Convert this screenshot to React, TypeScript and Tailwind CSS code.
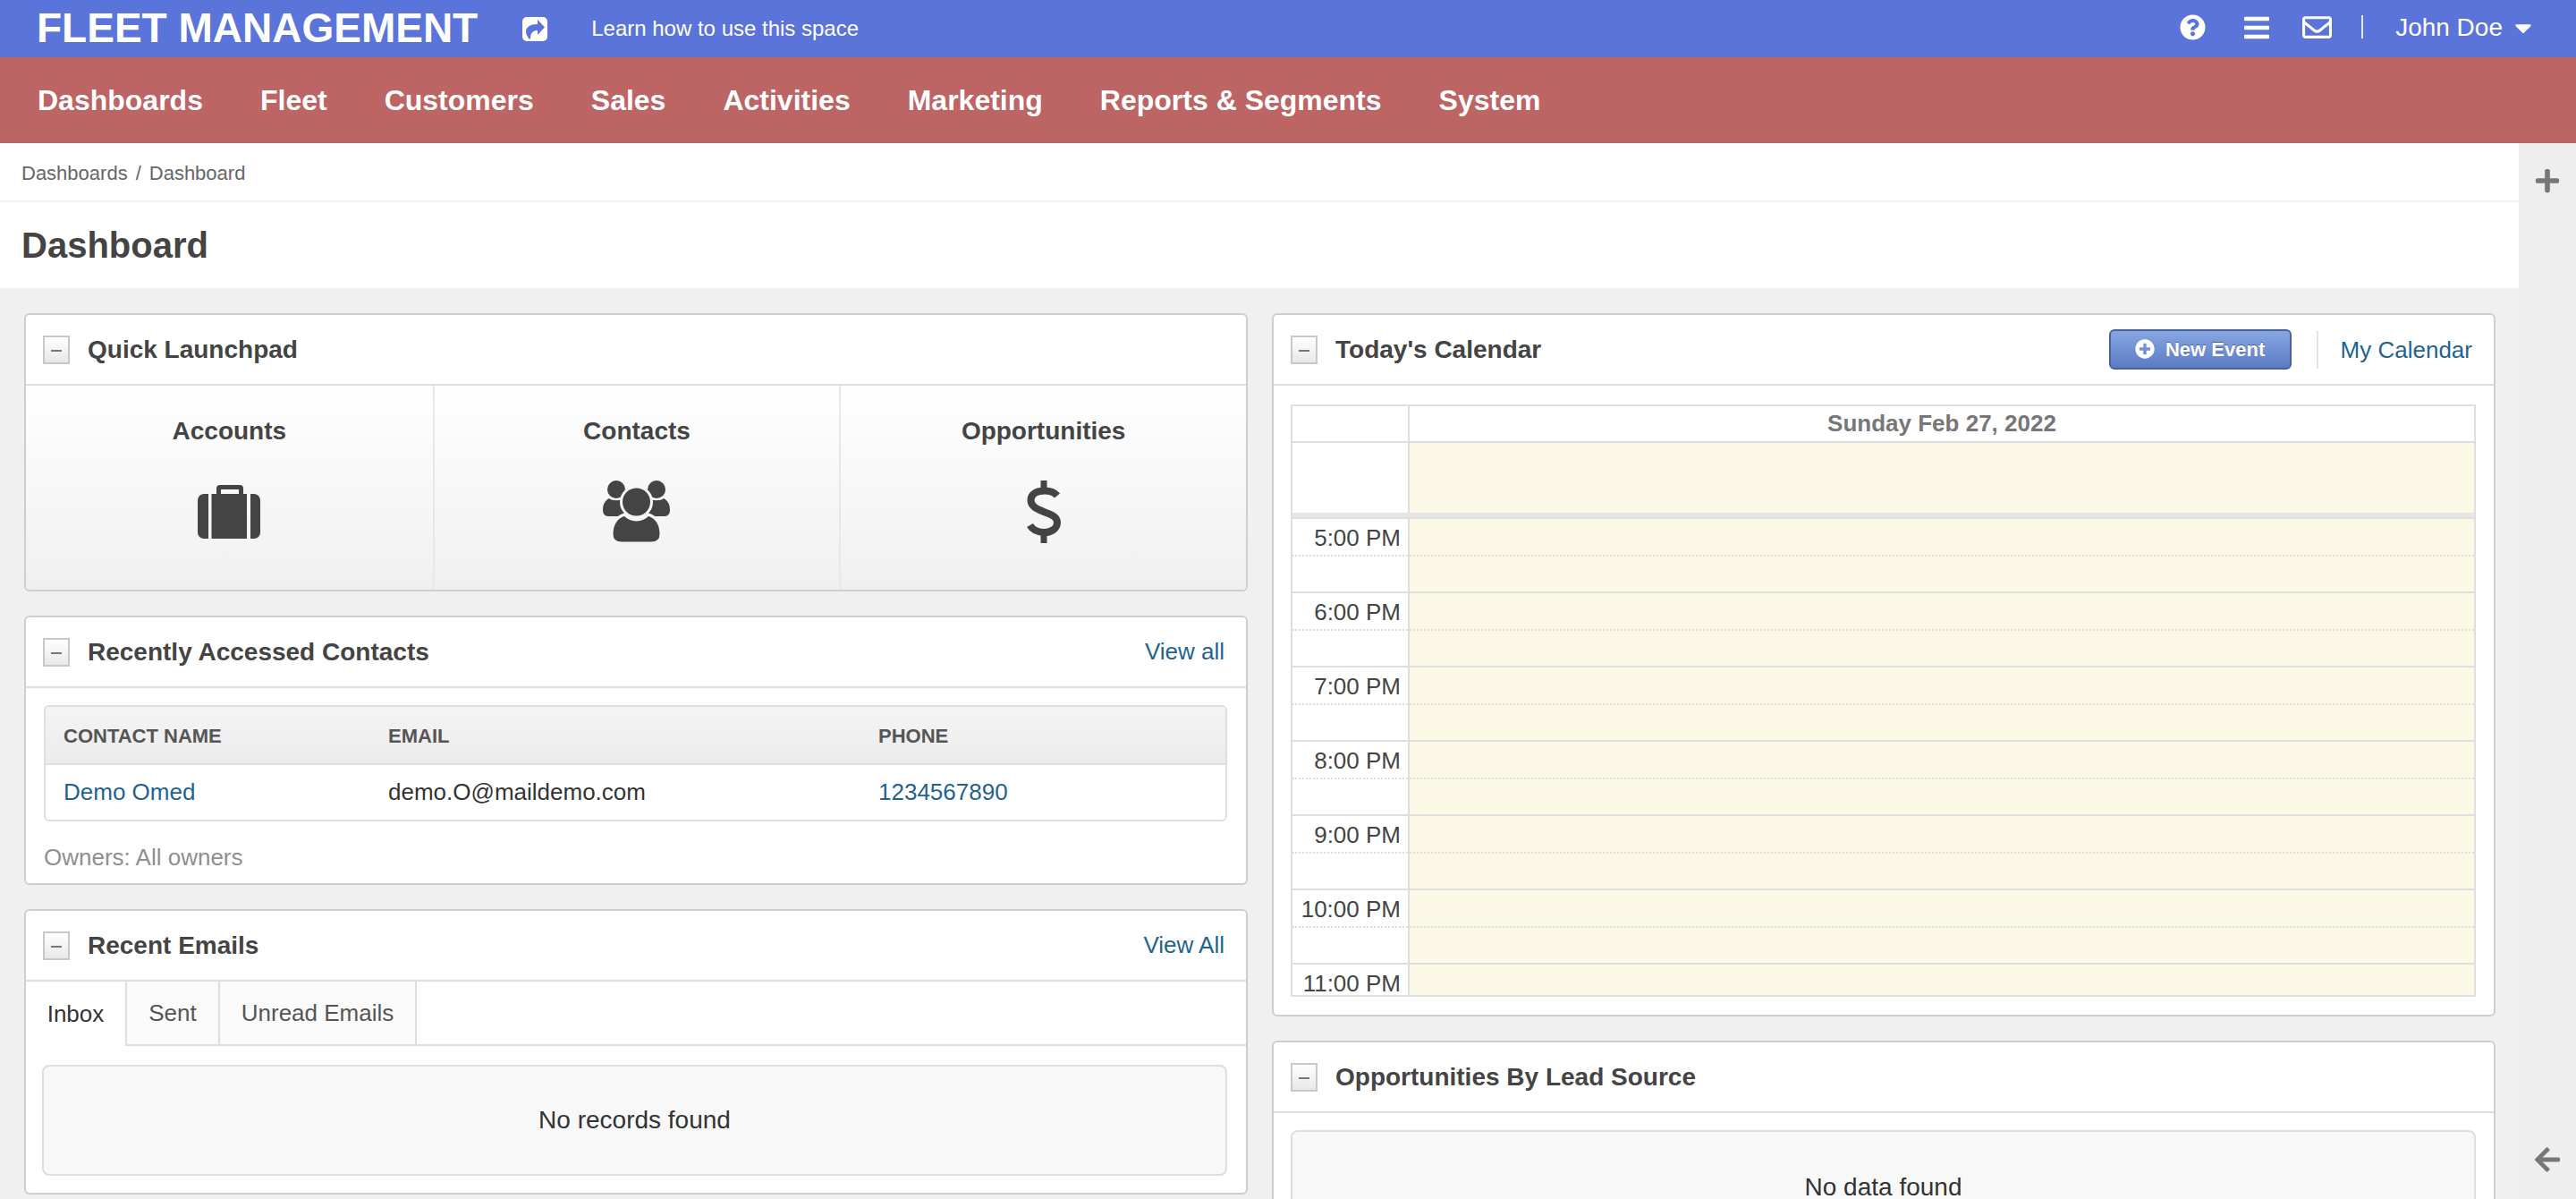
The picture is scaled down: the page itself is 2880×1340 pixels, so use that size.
import { FaBars, FaArrowLeft, FaPlus, FaQuestionCircle, FaRegEnvelope, FaPlusCircle, FaCaretDown } from 'react-icons/fa';

const FONT = "font-['Liberation_Sans',Arial,sans-serif]";
const NAV = ['Dashboards', 'Fleet', 'Customers', 'Sales', 'Activities', 'Marketing', 'Reports & Segments', 'System'];
const HOURS = ['5:00 PM', '6:00 PM', '7:00 PM', '8:00 PM', '9:00 PM', '10:00 PM', '11:00 PM'];

function ShareIcon() {
  return (
    <svg viewBox="0 0 28 27" className="w-[28px] h-[27px]">
      <rect width="28" height="27" rx="5" fill="#fff" />
      <path fill="#5b74d9" d="M17 3l8 8.500-8 8.500v-5c-5 0-8 2.500-8 9.500H7.500C5 21 4 18.500 4 16.500 4 11 9 8 17 8Z" />
    </svg>
  );
}

function BriefcaseIcon() {
  return (
    <svg viewBox="0 0 70 60" className="w-[70px] h-[60px]" fill="#444">
      <path fillRule="evenodd" d="M21 10V4a4 4 0 0 1 4-4h22a4 4 0 0 1 4 4v6h-5V5H26v5Z" />
      <path d="M7 10h5v50H7a7 7 0 0 1-7-7V17a7 7 0 0 1 7-7ZM15.500 10h39.500v50H15.500ZM59 10h4a7 7 0 0 1 7 7v36a7 7 0 0 1-7 7h-4Z" />
    </svg>
  );
}

function UsersIcon() {
  return (
    <svg viewBox="0 0 75 70" className="w-[75px] h-[70px]" fill="#444">
      <circle cx="15" cy="10" r="10" />
      <circle cx="60" cy="10" r="10" />
      <path d="M0 33C0 26 3 22 7 20C10 23 20 23 24 20V40H6C2 40 0 37 0 33Z" />
      <path d="M75 33C75 26 72 22 68 20C65 23 55 23 51 20V40H69C73 40 75 37 75 33Z" />
      <path stroke="#f6f6f6" strokeWidth="3" d="M10 60C10 48 16 41 24 38C28 42 33 44 37.500 44C42 44 47 42 51 38C59 41 65 48 65 60C65 67 60 70 54 70H21C15 70 10 67 10 60Z" />
      <circle cx="37.500" cy="24" r="17" stroke="#f6f6f6" strokeWidth="3" />
    </svg>
  );
}

function DollarIcon() {
  return (
    <svg viewBox="0 0 38 70" className="w-[38px] h-[70px]" fill="none">
      <path d="M15.500 0h7v12h-7zM15.500 58h7v12h-7z" fill="#444" />
      <path d="M34 17C30 12 25 11.500 20 11.500C11 11.500 4.500 15 4.500 22C4.500 29 11 31.500 19 35C27 38 34 40 34 47C34 54 27 58 20 58C13 58 7 56 3.500 50" stroke="#444" strokeWidth="8" />
    </svg>
  );
}

function Collapse() {
  return (
    <span className="w-[30px] h-[32px] border-2 border-[#c8c8c8] bg-gradient-to-b from-white to-[#e8e8e8] flex items-center justify-center shrink-0">
      <span className="w-[12px] h-[2px] bg-[#777] mt-[2px]" />
    </span>
  );
}

function CardHeader({ title, right }: { title: string; right?: React.ReactNode }) {
  return (
    <div className="h-[79px] flex items-center pl-[19px] pr-[24px] border-b-2 border-[#dedede]">
      <Collapse />
      <h2 className="ml-[20px] text-[28px] font-bold text-[#444]">{title}</h2>
      {right && <div className="ml-auto flex items-center">{right}</div>}
    </div>
  );
}

function Card({ children, className = '' }: { children: React.ReactNode; className?: string }) {
  return <section className={`bg-white border-2 border-[#cecece] rounded-[6px] overflow-hidden ${className}`}>{children}</section>;
}

function Launch({ label, icon, border }: { label: string; icon: React.ReactNode; border?: boolean }) {
  return (
    <div className={`flex flex-col items-center pt-[33px] ${border ? 'border-l-2 border-[#e8e8e8]' : ''}`}>
      <span className="text-[28px] leading-[36px] font-bold text-[#444]">{label}</span>
      <div className="h-[72px] mt-[36px] flex items-center justify-center">{icon}</div>
    </div>
  );
}

export default function App() {
  return (
    <div className={`${FONT} h-screen overflow-hidden flex flex-col bg-[#f0f0f0] text-[#333]`}>
      <header className="h-[64px] shrink-0 bg-[#5b74d9] text-white flex items-center pl-[41px] pr-[44px]">
        <span className="text-[46px] font-bold leading-none pb-[3px]">FLEET MANAGEMENT</span>
        <span className="ml-[50px]"><ShareIcon /></span>
        <span className="ml-[49px] text-[24px]">Learn how to use this space</span>
        <div className="ml-auto flex items-center pb-[3px]">
          <FaQuestionCircle className="text-[29px]" />
          <FaBars className="text-[32px] ml-[41px]" />
          <FaRegEnvelope className="text-[33px] ml-[35px]" />
          <span className="w-[2px] h-[26px] bg-[#dfe3f6] ml-[33px] -mt-[2px]" />
          <span className="ml-[36px] text-[28px]">John Doe</span>
          <FaCaretDown className="text-[30px] ml-[8px]" />
        </div>
      </header>

      <nav className="h-[96px] shrink-0 bg-[#bd6464] text-white flex items-center pl-[42px] gap-[64px] text-[32px] font-bold">
        {NAV.map((n) => <span key={n}>{n}</span>)}
      </nav>

      <div className="flex flex-1 min-h-0">
        <main className="flex-1 min-w-0 overflow-hidden">
          <div className="bg-white h-[62px] flex items-center pl-[24px] pt-[2px] text-[22px] text-[#666] border-b-2 border-[#f0f0f0] box-content">
            Dashboards<span className="mx-[9px]">/</span>Dashboard
          </div>
          <div className="bg-white h-[96px] flex items-center pl-[24px] text-[40px] font-bold text-[#444]">Dashboard</div>

          <div className="grid grid-cols-2 gap-[27px] pl-[27px] pr-[26px] pt-[28px] items-start">
            <div className="flex flex-col gap-[27px]">
              <Card>
                <CardHeader title="Quick Launchpad" />
                <div className="grid grid-cols-3 h-[228px] bg-gradient-to-b from-white to-[#f0f0f0]">
                  <Launch label="Accounts" icon={<BriefcaseIcon />} />
                  <Launch label="Contacts" icon={<UsersIcon />} border />
                  <Launch label="Opportunities" icon={<DollarIcon />} border />
                </div>
              </Card>

              <Card className="h-[301px]">
                <CardHeader title="Recently Accessed Contacts" right={<a className="text-[26px] text-[#1f6391]">View all</a>} />
                <div className="pl-[20px] pr-[21px] pt-[19px]">
                  <div className="border-2 border-[#dedede] rounded-[6px] overflow-hidden">
                    <div className="h-[65px] pt-[2px] border-b-2 border-[#dedede] bg-gradient-to-b from-[#f4f4f4] to-[#ececec] flex items-center text-[22px] font-bold text-[#555]">
                      <span className="w-[383px] pl-[20px]">CONTACT NAME</span>
                      <span className="w-[548px]">EMAIL</span>
                      <span>PHONE</span>
                    </div>
                    <div className="h-[61px] flex items-center text-[26px]">
                      <span className="w-[383px] pl-[20px] text-[#1f6391]">Demo Omed</span>
                      <span className="w-[548px] text-[#333]">demo.O@maildemo.com</span>
                      <span className="text-[#1f6391]">1234567890</span>
                    </div>
                  </div>
                  <p className="mt-[21px] text-[26px] text-[#8f8f8f]">Owners: All owners</p>
                </div>
              </Card>

              <Card className="h-[319px]">
                <CardHeader title="Recent Emails" right={<a className="text-[26px] text-[#1f6391]">View All</a>} />
                <div className="flex h-[72px] border-b-2 border-[#dedede] text-[26px]">
                  <span className="w-[113px] h-[72px] flex items-center justify-center bg-white border-r-2 border-[#dedede] text-[#333]">Inbox</span>
                  <span className="w-[104px] flex items-center justify-center bg-[#fafafa] border-r-2 border-[#dedede] text-[#555]">Sent</span>
                  <span className="w-[220px] flex items-center justify-center bg-[#fafafa] border-r-2 border-[#dedede] text-[#555]">Unread Emails</span>
                </div>
                <div className="pl-[18px] pr-[21px] pt-[21px]">
                  <div className="h-[124px] border-2 border-[#dedede] rounded-[8px] bg-[#f8f8f8] flex items-center justify-center text-[28px] text-[#333]">No records found</div>
                </div>
              </Card>
            </div>

            <div className="flex flex-col gap-[27px]">
              <Card className="h-[786px]">
                <CardHeader
                  title="Today's Calendar"
                  right={
                    <>
                      <button className="w-[204px] h-[45px] -mt-[1px] rounded-[6px] border-2 border-[#4a6296] bg-gradient-to-b from-[#88a6e2] to-[#5a7cc4] text-white text-[22px] font-bold flex items-center justify-center gap-[12px] [text-shadow:0_-1px_0_#4a6296]">
                        <FaPlusCircle className="text-[22px]" /> New Event
                      </button>
                      <span className="w-[2px] h-[42px] bg-[#e2e2e2] ml-[28px] mr-[25px]" />
                      <a className="text-[26px] text-[#1f6391] mt-[2px]">My Calendar</a>
                    </>
                  }
                />
                <div className="pl-[19px] pr-[20px] pt-[21px]">
                  <div className="h-[662px] border-2 border-[#dedede] overflow-hidden">
                    <div className="flex h-[39px] border-b-2 border-[#dedede] box-content">
                      <div className="w-[131px] border-r-2 border-[#dedede]" />
                      <div className="flex-1 text-center text-[26px] font-bold text-[#777] leading-[39px]">Sunday Feb 27, 2022</div>
                    </div>
                    <div className="flex h-[78px]">
                      <div className="w-[131px] border-r-2 border-[#dedede] bg-white" />
                      <div className="flex-1 bg-[#fbf8e6]" />
                    </div>
                    <div className="h-[7px] bg-[#e6e6e6] border-b-2 border-[#dedede]" />
                    {HOURS.map((h) => (
                      <div key={h} className="flex h-[83px] border-b-2 border-[#dedede]">
                        <div className="w-[131px] border-r-2 border-[#dedede] flex flex-col">
                          <div className="h-[42px] border-b-2 border-dotted border-[#dedede] text-right pr-[8px] text-[26px] leading-[42px] text-[#444]">{h}</div>
                        </div>
                        <div className="flex-1 bg-[#fbf8e6]">
                          <div className="h-[42px] border-b-2 border-dotted border-[#dedede]" />
                        </div>
                      </div>
                    ))}
                  </div>
                </div>
              </Card>

              <Card>
                <CardHeader title="Opportunities By Lead Source" />
                <div className="pl-[19px] pr-[20px] pt-[19px]">
                  <div className="h-[240px] border-2 border-[#dedede] rounded-[8px] bg-[#f8f8f8] pt-[41px] text-center text-[28px] text-[#333]">No data found</div>
                </div>
              </Card>
            </div>
          </div>
        </main>

        <aside className="w-[64px] shrink-0 bg-[#eeeeee] flex flex-col items-center justify-between pt-[27px] pb-[28px] text-[#777]">
          <FaPlus className="text-[30px]" />
          <FaArrowLeft className="text-[32px]" />
        </aside>
      </div>
    </div>
  );
}
